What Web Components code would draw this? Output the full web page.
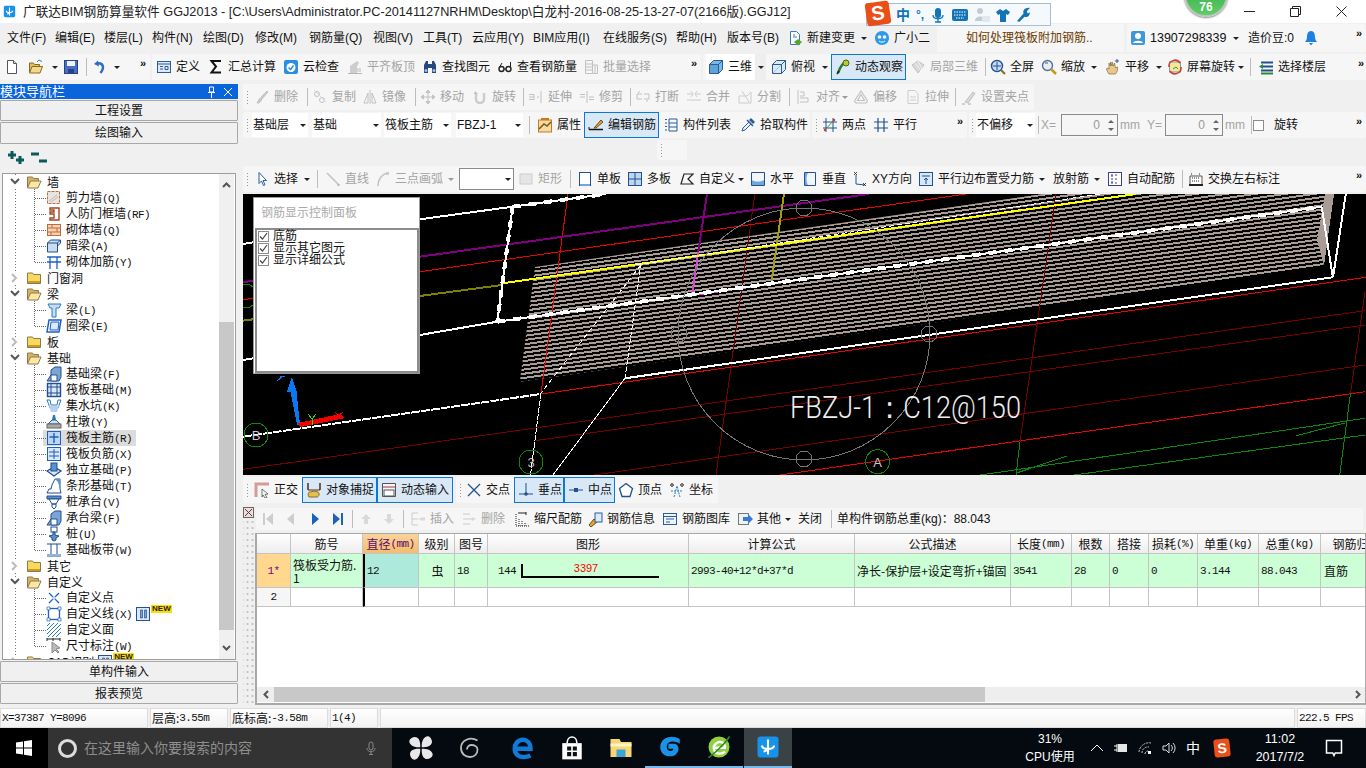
<!DOCTYPE html>
<html lang="zh">
<head>
<meta charset="utf-8">
<title>GGJ2013</title>
<style>
  html, body { margin: 0; height: 768px; overflow: hidden; background: #f0f0f0; }
  body { font: 12px/14px "Liberation Sans", "Noto Sans CJK SC", sans-serif; color: #111; }
  .main { display: flex; height: 624px; }
  .right { display: flex; flex-direction: column; width: 1123px; margin-left: 5px; }
</style>
</head>
<body>

<g-title>广联达BIM钢筋算量软件 GGJ2013 - [C:\Users\Administrator.PC-20141127NRHM\Desktop\白龙村-2016-08-25-13-27-07(2166版).GGJ12]</g-title>

<!-- menu -->
<g-row h="30">
  <g-bar w="1366" pad="7" flat>
    <g-btn w="48" plain>文件(F)</g-btn><g-btn w="49" plain>编辑(E)</g-btn><g-btn w="48" plain>楼层(L)</g-btn><g-btn w="51" plain>构件(N)</g-btn>
    <g-btn w="52" plain>绘图(D)</g-btn><g-btn w="54" plain>修改(M)</g-btn><g-btn w="64" plain>钢筋量(Q)</g-btn><g-btn w="50" plain>视图(V)</g-btn>
    <g-btn w="49" plain>工具(T)</g-btn><g-btn w="61" plain>云应用(Y)</g-btn><g-btn w="70" plain>BIM应用(I)</g-btn><g-btn w="73" plain>在线服务(S)</g-btn>
    <g-btn w="51" plain>帮助(H)</g-btn><g-btn w="58" plain>版本号(B)</g-btn>
    <g-btn w="71" i="newdoc">新建变更</g-btn><g-caret w="16"></g-caret><g-btn w="65" i="guang">广小二</g-btn>
    <g-bar w="187" pad="29" light style="color:#6b3a00">如何处理筏板附加钢筋..</g-bar>
    <g-bar w="239" pad="1" light style="margin-left:3px">
      <g-btn w="110" i="user" style="font-size:12.5px">13907298339</g-btn><g-caret w="12" style="margin-left:-8px"></g-caret>
      <g-btn w="47" plain style="margin-left:6px">造价豆:0</g-btn><g-icon name="bell" style="margin-left:8px"></g-icon><g-more></g-more>
    </g-bar>
  </g-bar>
</g-row>

<!-- standard toolbars -->
<g-row h="31" top="0" gap="2">
  <g-bar w="150" pad="2">
    <g-btn w="24" i="doc"></g-btn><g-btn w="22" i="open"></g-btn><g-caret w="13"></g-caret><g-btn w="22" i="save"></g-btn><g-sep w="7"></g-sep>
    <g-btn w="20" i="undo"></g-btn><g-caret w="14"></g-caret><g-more></g-more>
  </g-bar>
  <g-bar w="549" pad="2">
    <g-btn w="52" i="define">定义</g-btn><g-btn w="75" i="sigma">汇总计算</g-btn><g-btn w="64" i="cloud">云检查</g-btn><g-btn w="75" i="level" off>平齐板顶</g-btn>
    <g-btn w="75" i="find">查找图元</g-btn><g-btn w="86" i="glasses">查看钢筋量</g-btn><g-btn w="75" i="batch" off>批量选择</g-btn><g-more></g-more>
  </g-bar>
  <g-bar w="665" pad="3">
    <g-btn w="49" i="cube" style="background:#fff">三维</g-btn><g-caret w="11" style="background:#eee"></g-caret><g-btn w="49" i="top" style="margin-left:3px">俯视</g-btn><g-caret w="13"></g-caret>
    <g-btn w="75" i="orbit" on>动态观察</g-btn><g-btn w="74" i="local" off style="margin-left:2px">局部三维</g-btn><g-sep w="6"></g-sep>
    <g-btn w="51" i="fit">全屏</g-btn><g-btn w="49" i="zoom">缩放</g-btn><g-caret w="12"></g-caret><g-btn w="49" i="pan" style="margin-left:3px">平移</g-btn><g-caret w="13"></g-caret>
    <g-btn w="71" i="screen">屏幕旋转</g-btn><g-caret w="10"></g-caret><g-sep w="8"></g-sep><g-btn w="72" i="floors" style="margin-left:2px">选择楼层</g-btn><g-more></g-more>
  </g-bar>
</g-row>

<div class="main">
  <g-nav>
    <g-navbtn>工程设置</g-navbtn><g-navbtn>绘图输入</g-navbtn>
    <g-tree slot="tree"></g-tree>
    <g-navbtn slot="foot">单构件输入</g-navbtn><g-navbtn slot="foot">报表预览</g-navbtn>
  </g-nav>

  <div class="right">
    <g-row h="26">
      <g-bar w="791" grip="9">
        <g-btn w="52" i="del" off>删除</g-btn><g-sep w="6"></g-sep><g-btn w="50" i="copy" off>复制</g-btn><g-btn w="52" i="mirror" off>镜像</g-btn><g-sep w="6"></g-sep>
        <g-btn w="52" i="move" off>移动</g-btn><g-btn w="50" i="rot" off>旋转</g-btn><g-sep w="6"></g-sep><g-btn w="51" i="extend" off>延伸</g-btn><g-btn w="50" i="trim" off>修剪</g-btn><g-sep w="6"></g-sep>
        <g-btn w="51" i="brk" off>打断</g-btn><g-btn w="51" i="merge" off>合并</g-btn><g-btn w="50" i="split" off>分割</g-btn><g-sep w="9"></g-sep>
        <g-btn w="45" i="alignl" off>对齐</g-btn><g-caret w="12" off></g-caret><g-btn w="52" i="offset" off>偏移</g-btn><g-btn w="49" i="stretch" off>拉伸</g-btn><g-sep w="7"></g-sep>
        <g-btn w="72" i="grippt" off>设置夹点</g-btn>
      </g-bar>
    </g-row>
    <g-row h="26" top="2" gap="2">
      <g-bar w="567" grip="9">
        <g-combo w="56">基础层</g-combo><g-combo w="69" ml="4">基础</g-combo><g-combo w="67" ml="3">筏板主筋</g-combo><g-combo w="67" ml="5">FBZJ-1</g-combo>
        <g-sep w="12"></g-sep><g-btn w="49" i="attr">属性</g-btn><g-btn w="75" i="edit" on>编辑钢筋</g-btn><g-btn w="77" i="list" style="margin-left:2px">构件列表</g-btn><g-btn w="70" i="pick">拾取构件</g-btn>
      </g-bar>
      <g-bar w="155" grip="8">
        <g-btn w="51" i="twop">两点</g-btn><g-btn w="50" i="para">平行</g-btn><g-more></g-more>
      </g-bar>
      <g-bar w="397" grip="7">
        <g-combo w="59">不偏移</g-combo><g-sep w="6"></g-sep><g-btn w="20" plain off style="padding:0">X=</g-btn><g-spin w="57"></g-spin><g-btn w="29" plain off style="padding:0 0 0 2px">mm</g-btn>
        <g-btn w="18" plain off style="padding:0">Y=</g-btn><g-spin w="58"></g-spin><g-btn w="26" plain off style="padding:0 0 0 2px">mm</g-btn><g-sep w="4"></g-sep>
        <g-check w="21" box></g-check><g-btn w="40" plain style="padding:0">旋转</g-btn><g-more></g-more>
      </g-bar>
    </g-row>
    <g-row h="22" top="2" pad="414">
      <g-bar w="30" grip="9" style="height:20px"></g-bar>
    </g-row>
    <g-row h="26" top="4">
      <g-bar w="1123" grip="9">
        <g-btn w="50" i="cursor">选择</g-btn><g-caret w="10"></g-caret><g-sep w="11"></g-sep><g-btn w="50" i="line" off>直线</g-btn><g-btn w="72" i="arc" off>三点画弧</g-btn><g-caret w="12" off></g-caret>
        <g-combo w="55" ml="2" box></g-combo><g-btn w="51" i="rect" off style="margin-left:2px">矩形</g-btn><g-sep w="6"></g-sep>
        <g-btn w="50" i="single" style="margin-left:2px">单板</g-btn><g-btn w="52" i="multi">多板</g-btn><g-btn w="60" i="custom">自定义</g-btn><g-caret w="7"></g-caret>
        <g-btn w="52" i="horiz" style="margin-left:4px">水平</g-btn><g-btn w="50" i="vert">垂直</g-btn><g-btn w="66" i="xy">XY方向</g-btn><g-btn w="120" i="parallel">平行边布置受力筋</g-btn><g-caret w="12"></g-caret>
        <g-btn w="44" plain style="padding-left:5px">放射筋</g-btn><g-caret w="10"></g-caret><g-btn w="75" i="auto" style="margin-left:3px">自动配筋</g-btn><g-sep w="4"></g-sep>
        <g-btn w="100" i="swap" style="margin-left:2px">交换左右标注</g-btn><g-more></g-more>
      </g-bar>
    </g-row>

    <g-canvas style="margin-top:2px">
      <g-rebar-panel></g-rebar-panel>
    </g-canvas>

    <g-row h="25" top="2" gap="3">
      <g-bar w="210" grip="9">
        <g-btn w="50" i="ortho">正交</g-btn><g-btn w="75" i="snap" on>对象捕捉</g-btn><g-btn w="76" i="dyn" on>动态输入</g-btn>
      </g-bar>
      <g-bar w="262" grip="8">
        <g-btn w="50" i="cross">交点</g-btn><g-btn w="50" i="perp" on>垂点</g-btn><g-btn w="51" i="mid" on>中点</g-btn><g-btn w="51" i="vertex" style="margin-left:1px">顶点</g-btn><g-btn w="50" i="coord">坐标</g-btn>
      </g-bar>
    </g-row>

    <g-rebar>
      <g-bar w="1107" style="height:22px">
        <g-btn w="23" i="first" off center></g-btn><g-btn w="24" i="prev" off center></g-btn><g-btn w="23" i="next" center></g-btn><g-btn w="24" i="last" center></g-btn><g-sep w="4"></g-sep>
        <g-btn w="24" i="up" off center></g-btn><g-btn w="22" i="down" off center></g-btn><g-sep w="6"></g-sep>
        <g-btn w="50" i="insert" off style="margin-left:2px">插入</g-btn><g-btn w="53" i="remove" off style="margin-left:1px">删除</g-btn><g-btn w="73" i="scale">缩尺配筋</g-btn>
        <g-btn w="75" i="info">钢筋信息</g-btn><g-btn w="75" i="lib">钢筋图库</g-btn><g-btn w="49" i="other">其他</g-btn><g-caret w="8"></g-caret>
        <g-btn w="36" plain style="padding-left:6px">关闭</g-btn><g-sep w="6"></g-sep>
        <g-btn w="170" plain style="padding-left:3px">单构件钢筋总重(kg)：88.043</g-btn>
      </g-bar>
      <g-table slot="table"></g-table>
    </g-rebar>
  </div>
</div>

<g-status></g-status>
<g-taskbar></g-taskbar>

<script>
// icons, 16x16 unless the user asks for another size
const ICONS = {
  doc: '<path d="M3.5 1.5h6l3 3v10h-9z" fill="#fff" stroke="#555"/><path d="M9.5 1.5v3h3" fill="#ddd" stroke="#555"/>',
  open: '<path d="M1.5 13V4h4l1 1.5h5V8" fill="#e6bd5c" stroke="#8a6a20"/><path d="M1.5 14l2.5-6.5h10.5L12 14z" fill="#f5d98a" stroke="#8a6a20"/><path d="M9 3l2-2 3 1.5" fill="none" stroke="#3a7ac0"/>',
  save: '<rect x="1.5" y="1.5" width="13" height="13" fill="#4a6fc0" stroke="#26408a"/><rect x="4" y="2" width="8" height="5" fill="#eef2fb"/><rect x="5" y="10" width="6" height="4.5" fill="#26408a"/>',
  undo: '<path d="M6 1.5L2 5l5 2.5z" fill="#2d6fc4"/><path d="M5 4.5c6-1 8 4 3.5 9.5" fill="none" stroke="#2d6fc4" stroke-width="2.5"/>',
  define: '<rect x="1.5" y="2.5" width="13" height="11" fill="#dfeaf7" stroke="#2a5d9c"/><path d="M1.5 5h13M4 7.5h3M4 10h3M9 7.5h3v3H9z" stroke="#2a5d9c" fill="none"/>',
  sigma: '<path d="M12 3V2H3.5l4.5 5.5-4.5 6H12v-1" fill="none" stroke="#111" stroke-width="2"/>',
  cloud: '<rect x="1" y="1" width="14" height="14" rx="2" fill="#2a8fe0"/><circle cx="8" cy="8.5" r="4.5" fill="#fff"/><path d="M5.5 8.5l2 2 3-4" fill="none" stroke="#2a8fe0" stroke-width="1.5"/>',
  level: '<path d="M3 14V7l7-5 2 2-2 3v7z" fill="#bbb"/><path d="M1 14.5h14" stroke="#999"/><rect x="10" y="9" width="4" height="4" fill="#ccc"/>',
  find: '<path d="M2 14V6l2-4h2v12zM10 14V2h2l2 4v8z" fill="#27477e"/><rect x="6" y="5" width="4" height="4" fill="#27477e"/><circle cx="4" cy="11.5" r="1.5" fill="#9fc0ec"/><circle cx="12" cy="11.5" r="1.5" fill="#9fc0ec"/>',
  glasses: '<circle cx="4.5" cy="10" r="2.5" fill="none" stroke="#222" stroke-width="1.4"/><circle cx="11.5" cy="10" r="2.5" fill="none" stroke="#222" stroke-width="1.4"/><path d="M7 10h2M2.5 8L5 4M13.5 8V3" stroke="#222" fill="none"/>',
  batch: '<path d="M2.5 1.5h7v13h-7zM2.5 5h7M2.5 8h7M2.5 11h7M9.5 6h5v8.5h-5M12 6v8" fill="none" stroke="#aaa"/>',
  cube: '<path d="M1.5 5.5l4-4h9v9l-4 4h-9z" fill="#7ab8e8" stroke="#2a5d8c"/><path d="M1.5 5.5h9v9M10.5 5.5l4-4" fill="none" stroke="#2a5d8c"/><rect x="2" y="6" width="8" height="8" fill="#5ea4dc"/>',
  top: '<path d="M1.5 5.5l4-4h9v9l-4 4h-9z" fill="#dbeaf7" stroke="#2a5d8c"/><path d="M1.5 5.5h9v9M10.5 5.5l4-4" fill="none" stroke="#2a5d8c"/><path d="M2 14l8-8" stroke="#9fc4e6"/>',
  orbit: '<path d="M3 14C5 8 8 4 12 1.5" fill="none" stroke="#2d7a2d" stroke-width="2.5"/><circle cx="11" cy="4" r="3" fill="#b9c92e" stroke="#566010"/><path d="M2 15l2-3" stroke="#222" stroke-width="1.5"/>',
  local: '<path d="M2 6l6-4 6 4-6 8z" fill="#ccc" stroke="#aaa"/><path d="M5 4l6 8M8 2l4 8" stroke="#eee"/>',
  fit: '<circle cx="7" cy="7" r="5.5" fill="#c9ddf4" stroke="#23508f" stroke-width="1.4"/><path d="M7 3v8M3 7h8" stroke="#23508f"/><path d="M11 11l4 4" stroke="#8a6a20" stroke-width="2"/>',
  zoom: '<circle cx="6.5" cy="6.5" r="5" fill="#e6eef8" stroke="#55708f" stroke-width="1.4"/><path d="M10 10l5 5" stroke="#c49a20" stroke-width="2.5"/><path d="M4 4h3" stroke="#2a5d9c"/>',
  pan: '<path d="M4 15c-2-3-3-5-2-6l2 1V4l1.5 3V3l1.5 4V3l1.5 4 1-3 1 5 2-1c.5 3-.5 5-2 7z" fill="#e7c88a" stroke="#8a6a3a" stroke-width=".7"/><path d="M12 4V0M10 2h4" stroke="#2a5d9c"/>',
  screen: '<rect x="2.5" y="3" width="11" height="10" fill="#f5e79a" stroke="#6a9fd0"/><path d="M2 8a6 6 0 0 1 11-4M14 8a6 6 0 0 1-11 4" fill="none" stroke="#d93a2a" stroke-width="1.5"/><path d="M6 10l3-2 2 2" stroke="#3a9a3a" fill="none"/>',
  floors: '<path d="M3 3.5h12M3 7.5h12M3 11.5h12" stroke="#26508a" stroke-width="2"/><path d="M3 14.5h12" stroke="#2a8a3a" stroke-width="2"/><path d="M5 5L1 7.5 5 10z" fill="#2a8a3a"/>',
  del: '<path d="M3 14l3-5 2 2-3 3zM7 8l6-6 1 1-6 7z" fill="#bbb" stroke="#aaa"/>',
  copy: '<circle cx="5" cy="5" r="2.5" fill="none" stroke="#aaa"/><circle cx="10" cy="11" r="2.5" fill="none" stroke="#aaa"/><path d="M2 1l12 12" stroke="#ccc"/>',
  mirror: '<path d="M8 1v14M6 4L2 14h4zM10 4l4 10h-4z" fill="none" stroke="#aaa"/>',
  move: '<path d="M8 1v14M1 8h14M8 1L6 3.5h4zM8 15l-2-2.5h4zM1 8l2.5-2v4zM15 8l-2.5-2v4z" fill="#bbb" stroke="#aaa"/>',
  rot: '<path d="M4 4v6a4 4 0 1 0 8 0V4" fill="none" stroke="#bbb" stroke-width="2.5"/><path d="M3 2l3 3H2z" fill="#aaa"/>',
  extend: '<path d="M1 8h5M1 5.5h5v5H1M13 2v12M9 8h2" fill="none" stroke="#aaa"/>',
  trim: '<path d="M8 2v12M1 8h5M10 8h5M1 5.5h5M10 10.5h5" fill="none" stroke="#aaa"/>',
  brk: '<path d="M2 5h5M9 5h5M2 10h5M9 10h5M2 5v5M14 5v5M5 2l-2 2M11 13l2-2" fill="none" stroke="#aaa"/>',
  merge: '<path d="M1 5h6M9 5h6M1 11h14M5 2l2 3-2 3M11 2L9 5l2 3" fill="none" stroke="#bbb"/>',
  split: '<path d="M2 14V7h8l4-4v11zM5 2l7 11" fill="none" stroke="#bbb"/>',
  alignl: '<path d="M2 1v14M4 3h4v4H4M4 9h8v4H4" fill="none" stroke="#aaa"/>',
  offset: '<path d="M8 2l6 9a2 2 0 0 1-2 3H4a2 2 0 0 1-2-3zM8 5.5l3.5 6h-7z" fill="none" stroke="#aaa" stroke-width="1.2"/>',
  stretch: '<path d="M3 1.5h7l3 3v10H3zM5 8h6M5 11h6" fill="none" stroke="#bbb"/>',
  grippt: '<path d="M4 13L12 3l2 1.5L7 14z" fill="#ccc" stroke="#aaa"/><path d="M1 15h3M7 15h3" stroke="#888"/>',
  attr: '<rect x="1.5" y="3" width="13" height="12" fill="#f3d9a4" stroke="#c77a20"/><path d="M2 12l5-5 3 2 4-4" fill="none" stroke="#7a5a10" stroke-width="1.5"/><path d="M4 1h8v2H4z" fill="#c77a20"/>',
  edit: '<path d="M1 12.5h14" stroke="#111" stroke-width="1.5"/><path d="M1 12.5V10" stroke="#111"/><path d="M6 11l7-8 2 2-7 6z" fill="#e8a33a" stroke="#6a4a10"/>',
  list: '<path d="M2 2.5h2M2 6h2M2 9.5h2M2 13h2M6 2h8v12H6zM6 6h8M6 10h8" fill="none" stroke="#2a5d9c"/>',
  pick: '<path d="M2 14l1-3 6-6 2 2-6 6z" fill="#e8f2fb" stroke="#2a5d9c"/><path d="M9 3l2-2 4 4-2 2z" fill="#2a5d9c"/><path d="M7 3l6 6" stroke="#2a5d9c" stroke-width="1.5"/>',
  twop: '<path d="M4 1v14M11 1v14M1 5h14M1 11h14" stroke="#23508f"/><path d="M2 14L13 2" stroke="#3a9a3a"/><circle cx="3" cy="13" r="1.2" fill="#d33"/><circle cx="12" cy="3" r="1.2" fill="#d33"/>',
  para: '<path d="M5 1v14M11 1v14M1 5h14M1 11h14" stroke="#23508f" stroke-width="1.2"/>',
  cursor: '<path d="M5 1.5v11l2.5-2.5 2 4.5 1.5-.7-2-4.3h3.5z" fill="#fff" stroke="#2a5d9c"/>',
  line: '<path d="M2 2l12 12" stroke="#aaa" stroke-width="1.5"/><path d="M12 14h3" stroke="#888"/>',
  arc: '<path d="M3 15C3 9 6 4 12 2" fill="none" stroke="#aaa" stroke-width="1.5"/><rect x="11" y="1" width="3" height="3" fill="#bbb"/>',
  rect: '<rect x="2" y="3" width="12" height="10" fill="#ddd" stroke="#bbb"/>',
  single: '<rect x="2.5" y="1.5" width="11" height="13" fill="#fff" stroke="#23508f"/><path d="M3 14h10" stroke="#6fa8de" stroke-width="2"/>',
  multi: '<rect x="1.5" y="1.5" width="13" height="13" fill="#bcd6f0" stroke="#23508f"/><path d="M8 1.5v13M1.5 8h13" stroke="#23508f"/>',
  custom: '<path d="M2 13l3-10h9l-5 5 5 5z" fill="none" stroke="#222" stroke-width="1.2"/>',
  horiz: '<path d="M1.5 1.5h13v13h-13z" fill="#f2f6fb" stroke="#23508f"/><path d="M2 9c3 2 9 2 12 0v5H2z" fill="#6fa8de"/>',
  vert: '<path d="M2.5 1.5h11v13h-11z" fill="#f2f6fb" stroke="#23508f"/><path d="M6 2c-2 3-2 9 0 12H3V2z" fill="#6fa8de"/>',
  xy: '<path d="M4 4v9l9 1" fill="none" stroke="#23508f"/><path d="M2 1l3 3M5 1L2 4M11 12l3 3M14 12l-3 3" stroke="#222" fill="none" stroke-width=".8"/>',
  parallel: '<rect x="1.5" y="1.5" width="13" height="13" fill="#d9e8f7" stroke="#23508f"/><path d="M4 5h8M8 13V7M6 9l2-2 2 2" stroke="#23508f" fill="none"/>',
  auto: '<rect x="1.5" y="1.5" width="13" height="13" fill="#fff" stroke="#3b3f9c"/><path d="M5 4v8M4 4h2M4 12h2M8 4h3M8 8h3M8 12h3" stroke="#3b3f9c" stroke-dasharray="2 1" fill="none"/>',
  swap: '<path d="M1 13h14v2H1z" fill="#222"/><path d="M2 13V5h12v8" fill="#fff" stroke="#555"/><path d="M3 3h2M11 3h2M4 7h8M4 10h8" stroke="#222" stroke-dasharray="1 1"/>',
  ortho: '<path d="M2 15V2h13" fill="none" stroke="#d79a9a" stroke-width="3"/><path d="M8 7l6 5-3 .5 2 3-2 .5-2-3-1 2z" fill="#f4f4f4" stroke="#444" stroke-width=".7"/>',
  snap: '<path d="M2 1v7M14 1v7" stroke="#5a2a10" stroke-width="1.5"/><path d="M2 8h12" stroke="#5a2a10"/><path d="M3 15c-2-3 0-6 2-5l3-1 4 1c2 1 1 5-1 5z" fill="#e6c04c" stroke="#8a6a20"/>',
  dyn: '<path d="M1.5 1.5h13v13h-13z" fill="#f2f6fb" stroke="#555"/><path d="M1.5 5h13" stroke="#a33"/><rect x="3" y="8" width="10" height="6" fill="#fff" stroke="#555"/>',
  cross: '<path d="M2 2l12 12M14 2L2 14" stroke="#23508f" stroke-width="1.3"/>',
  perp: '<path d="M1 12h14M8 1v11" stroke="#23508f"/><circle cx="8" cy="12" r="1.8" fill="#23508f"/>',
  mid: '<path d="M1 8h14" stroke="#23508f"/><rect x="6" y="6" width="4" height="4" fill="#23508f"/>',
  vertex: '<path d="M8 1.5l6.5 5-2.5 8H4l-2.5-8z" fill="#fff" stroke="#23508f" stroke-width="1.3"/>',
  coord: '<path d="M5 15L8 4l3 11M2 9h12" fill="none" stroke="#2a7ab8" stroke-dasharray="2 1"/><circle cx="3" cy="3" r="1.3" fill="none" stroke="#222"/><circle cx="13" cy="3" r="1.3" fill="none" stroke="#222"/>',
  first: '<path d="M3 2h2v12H3zM13 2L6 8l7 6z" fill="#bbb"/>',
  prev: '<path d="M11 2L4 8l7 6z" fill="#bbb"/>',
  next: '<path d="M5 2l7 6-7 6z" fill="#1f5fc0"/>',
  last: '<path d="M11 2h2v12h-2zM3 2l7 6-7 6z" fill="#1f5fc0"/>',
  up: '<path d="M8 3l5 5h-3v5H6V8H3z" fill="#ccc"/>',
  down: '<path d="M8 13l5-5h-3V3H6v5H3z" fill="#ccc"/>',
  insert: '<path d="M2 2h6M2 8h6M2 14h6M2 2v12M9 8h3" fill="none" stroke="#bbb"/><rect x="11" y="6.5" width="4" height="3" fill="#ccc"/>',
  remove: '<path d="M2 3h7M2 8h9M2 13h7" fill="none" stroke="#bbb"/><path d="M11 6l4 2-4 2z" fill="#ccc"/>',
  scale: '<path d="M2 3v12M2 15h13M5 8v7M8 10v5M11 12v3" stroke="#222" stroke-dasharray="1 1"/><path d="M4 2h8M12 1v3" stroke="#222"/>',
  info: '<path d="M2 14l5-6 3 3-6 5z" fill="#e8a33a" stroke="#6a4a10"/><rect x="8" y="2" width="7" height="9" fill="#dbe8f7" stroke="#2a5d9c"/>',
  lib: '<rect x="1.5" y="2.5" width="13" height="11" fill="#eef3fa" stroke="#2a5d9c"/><path d="M1.5 5.5h13M4 8h8M4 11h4" stroke="#2a5d9c"/>',
  other: '<rect x="1.5" y="2.5" width="10" height="11" fill="#eef3fa" stroke="#777"/><path d="M6 6h5V3l5 5-5 5v-3H6z" fill="#3a7ad0"/>',
  newdoc: '<path d="M3.5 1.5h6l3 3v10h-9z" fill="#fff" stroke="#3a7ac0"/><path d="M6 7h4M6 5h2" stroke="#3a7ac0"/><path d="M11 9l4 3-4 3.5-4-3.5z" fill="#55a630"/>',
  guang: '<path d="M1 8c0-4 3-7 7-7s7 3 7 7c0 4-3 7-7 7s-7-3-7-7z" fill="#2f9be8"/><circle cx="5.5" cy="7" r="1.8" fill="#fff"/><circle cx="10.5" cy="7" r="1.8" fill="#fff"/><path d="M5 11c2 1.5 4 1.5 6 0" stroke="#fff" fill="none"/>',
  user: '<rect x="1" y="1" width="14" height="14" rx="2" fill="#3f97d8"/><circle cx="8" cy="6" r="3" fill="#fff"/><path d="M3 13c1-3 9-3 10 0z" fill="#fff"/>',
  bell: '<path d="M8 1c-3 0-4 3-4 6 0 2-1 4-2 5h12c-1-1-2-3-2-5 0-3-1-6-4-6z" fill="#1f7fe0"/><path d="M6 13h4l-2 2.5z" fill="#1f7fe0"/>',
  app: '<rect x="1" y="1" width="14" height="14" rx="2" fill="#1792ea"/><path d="M8 3v10M4 7c0 3 8 3 8 0M5 11c1.5 0 2-1 3-2" fill="none" stroke="#fff" stroke-width="1.4"/>',
  // tree icons
  fopen: '<path d="M1.5 13V3h5l1 1.5h5V7" fill="#d9b25a" stroke="#8a7a50"/><path d="M1.5 14l3-7h10.5l-3 7z" fill="#fbe8a6" stroke="#8a7a50"/>',
  fclosed: '<path d="M1.5 13.5V3h5l1 1.5h7v9z" fill="#fbd95e" stroke="#8a7a50"/><path d="M2 13h12V11H2z" fill="#c79a20"/>',
  shear: '<rect x="1.5" y="1.5" width="12" height="12" fill="#e8e4de" stroke="#c2683a" stroke-dasharray="3 1"/><path d="M3 11l8-6M5 12l7-5" stroke="#bbb"/>',
  rfwall: '<path d="M4 2h9v12H4v-2h4V8H4V6h4V4H4z" fill="#fff" stroke="#a3481e" stroke-width="1.4"/>',
  brick: '<rect x="1.5" y="2.5" width="13" height="11" fill="#f6d4b6" stroke="#c2683a"/><path d="M1.5 6h13M1.5 10h13M6 2.5V6M11 6v4M5 10v3.5" stroke="#c2683a"/>',
  darkb: '<path d="M1.5 5l3-3h10v3l-3 3v6h-10z" fill="#c9ddf1" stroke="#23508f"/><path d="M1.5 5h10v9M11.5 5l3-3" fill="none" stroke="#23508f"/>',
  reinf: '<path d="M1 3h14M1 8h14M4 3v12M11 3v12M4 8h7" stroke="#1f5fc0" fill="none" stroke-width="1.3"/>',
  beam: '<path d="M2 2h13l-2 4h-3v9H6V6H4z" fill="#c9ddf1" stroke="#2a7ac0"/>',
  ringb: '<path d="M3 2h12l-2 12H1z" fill="#fff" stroke="#1f5fc0" stroke-width="1.5"/><path d="M5 4h8l-1 8H4z" fill="#dbe8f7" stroke="#1f5fc0"/>',
  fbeam: '<path d="M1 15l4-6V4l4-3h6v10l-2 4z" fill="#7aa4d6" stroke="#23508f"/><path d="M5 15V9h6v6z" fill="#fff" stroke="#23508f"/>',
  raft: '<rect x="1.5" y="1.5" width="13" height="13" fill="#dbe8f7" stroke="#1f4f8f" stroke-width="1.4"/><path d="M5 1.5v13M11 1.5v13M1.5 5h13M1.5 11h13" stroke="#1f4f8f"/>',
  pit: '<path d="M1 2h3l1 5h6l1-5h3l-3 8H4z" fill="#fff" stroke="#2a7ac0"/><path d="M3 8h10l-2 6H5z" fill="#b4d2ee"/>',
  pier: '<path d="M7 1h2l1 5H6z" fill="#2a7ac0"/><path d="M2 10l4-4h4l4 4z" fill="#cfe0f2" stroke="#2a5d9c"/><rect x="1" y="10" width="14" height="4" fill="#aaa" stroke="#666"/>',
  main: '<rect x="1.5" y="1.5" width="13" height="13" fill="#bcd6f5" stroke="#1f5fc0"/><path d="M8 3v10M3.5 7h9" stroke="#1f5fc0" stroke-width="1.4"/>',
  neg: '<rect x="1.5" y="1.5" width="13" height="13" fill="#dbe8f7" stroke="#1f5fc0"/><path d="M8 3v10M3 6h10M3 10h10" stroke="#1f5fc0"/>',
  iso: '<path d="M1 9l7-4 7 4-7 5z" fill="#dbe8f7" stroke="#1f4f8f" stroke-width="1.3"/><rect x="5" y="1" width="6" height="8" fill="#5d8fc9" stroke="#1f4f8f"/>',
  stripf: '<path d="M1 15l2-4h2l1-4 3-6h5v10l1 4z" fill="#fff" stroke="#1f4f8f"/><path d="M9 1h5v10L12 4z" fill="#5d8fc9"/>',
  cap: '<path d="M1 2h14v3H1z" fill="#5d8fc9" stroke="#1f4f8f"/><path d="M3 5l3 5h4l3-5zM6 10h4v3L8 15l-2-2z" fill="#fff" stroke="#1f4f8f"/>',
  pile: '<rect x="5" y="1" width="6" height="5" fill="#fff" stroke="#1f4f8f"/><path d="M7 6h2v3l4 1-3 2v2l-2 1-2-1v-2L3 10l4-1z" fill="#5d8fc9" stroke="#1f4f8f"/>',
  band: '<path d="M1 2h14M1 14h14M5 2v12M11 2v12M2 13h12" stroke="#1f4f8f" fill="none"/><path d="M1 12h14v2H1z" fill="#8fb4e0"/>',
  cpoint: '<path d="M3 3l10 10M13 3L3 13" stroke="#1f5fc0" stroke-width="1.2"/><circle cx="8" cy="8" r="1.8" fill="#bcd6f5"/>',
  cline: '<rect x="2.5" y="2.5" width="11" height="11" fill="#fff" stroke="#1f5fc0" stroke-width="1.3"/><path d="M1 1h3v3H1zM12 1h3v3h-3zM1 12h3v3H1zM12 12h3v3h-3z" fill="#fff" stroke="#1f5fc0" stroke-width=".7"/>',
  cface: '<path d="M1 4l3-3M1 8l7-7M1 12L12 1M2 15L15 2M6 15l9-9M10 15l5-5" stroke="#2a7ac0"/>',
  dim: '<path d="M1 1h13M1 0v3M7 0v3M14 0v3" stroke="#222"/><path d="M6 4v11l3-3 3 3 1-1-3-3 4-1z" fill="#bbb" stroke="#888"/>',
  newlist: '<rect x="1.5" y="1.5" width="13" height="13" fill="#dbe8f7" stroke="#23508f"/><path d="M5.5 4h2v8h-2zM9.5 4h2v8h-2z" fill="#7aa4d6" stroke="#23508f" stroke-width=".7"/>',
  // taskbar
  pinwheel: '<path d="M7.5 7.5C2 8-1 4 2 2s6 0 5.5 5.5zM8.5 7.5C8 2 12-1 14 2s0 6-5.5 5.5zM7.5 8.5C8 14 4 17 2 14s0-6 5.5-5.5zM8.5 8.5C14 8 17 12 14 14s-6 0-5.5-5.5z" fill="#e8e8e8"/>',
  swirl: '<path d="M13 3C8 0 2 3 2 8c0 4 3 6 6 6s5-2 5-5c0-2-2-3-4-3-1.5 0-3 1-3 3" fill="none" stroke="#bbb" stroke-width="1.2"/>',
  edge: '<path d="M3.5 8.5h9.500C13 4.500 10.500 2.500 8 2.500 4.500 2.500 2.500 5.500 2.500 8.500c0 4 3 5.500 6 5.500 2 0 3.500-.5 4.500-1" fill="none" stroke="#0f7ad8" stroke-width="3"/>',
  store: '<path d="M2 5h12v10H2z" fill="#fff"/><path d="M5 5c0-5 6-5 6 0" fill="none" stroke="#fff"/><path d="M5 7h2.5v2.500H5zM8.5 7H11v2.500H8.500zM5 10.500h2.500V13H5zM8.500 10.500H11V13H8.500z" fill="#111"/>',
  explorer: '<path d="M1 2h6l1 2h7v10H1z" fill="#f6d773"/><path d="M1 5h14v2H1z" fill="#fff3c4"/><path d="M5 9h6v5H5z" fill="#3aa3d8"/>',
  gblue: '<path d="M14 3C9 0 2 2 2 8c0 5 5 7 9 5 3-2 3-6 0-7H7v3h3c0 2-4 2-4-1 0-4 5-4 8-2z" fill="#1c92e6"/>',
  ie: '<circle cx="8" cy="8" r="7" fill="#8fd13f"/><path d="M4 8.5h8C12 5 9 4 7 5S4 8 5 10.500 10 13 12 11" fill="none" stroke="#fff" stroke-width="1.6"/><path d="M1 15C3 14 12 6 15 1" fill="none" stroke="#2f8a2f"/>',
  mic: '<rect x="6" y="2" width="4" height="8" rx="2" fill="none" stroke="#888"/><path d="M4 8c0 5 8 5 8 0M8 12v2M6 14.5h4" fill="none" stroke="#888"/>',
  power: '<rect x="5" y="4" width="9" height="8" fill="#fff" opacity=".9"/><path d="M1 6h3M1 10h3M4 4v8" stroke="#fff"/>',
  wifi: '<path d="M2 12a10 10 0 0 1 12-9M5 13a6 6 0 0 1 7-6M8 14a3 3 0 0 1 3-3" fill="none" stroke="#ccc" stroke-dasharray="2 1"/><rect x="11" y="11" width="3" height="3" fill="#fff"/>',
  sound: '<path d="M2 6h3l3-3v10l-3-3H2z" fill="none" stroke="#ddd"/><path d="M10 5a4 4 0 0 1 0 6M12 3a7 7 0 0 1 0 10" fill="none" stroke="#ddd"/>',
  note: '<path d="M2 2h12v10H9l-1 2-1-2H2z" fill="none" stroke="#fff" stroke-width="1.2"/>'
};

// small helper so every element below stays a plain class with an open shadow root
function shadow(el, html) {
  el.attachShadow({ mode: "open" }).innerHTML = html;
  return el.shadowRoot;
}
function sizeFromAttrs(el) {
  if (el.hasAttribute("w")) el.style.width = el.getAttribute("w") + "px";
  if (el.hasAttribute("ml")) el.style.marginLeft = el.getAttribute("ml") + "px";
}

class GIcon extends HTMLElement {
  connectedCallback() {
    var s = this.getAttribute("size") || 16;
    if (!this.shadowRoot) {
      shadow(this, `<style>:host{display:block;flex:none;line-height:0}</style>
        <svg width="${s}" height="${s}" viewBox="0 0 16 16">${ICONS[this.getAttribute("name")] || ""}</svg>`);
    }
  }
}
customElements.define("g-icon", GIcon);

class GRow extends HTMLElement {
  constructor() {
    super();
    shadow(this, `<style>:host{display:flex;flex:none;box-sizing:border-box;align-items:flex-start}</style><slot></slot>`);
  }
  connectedCallback() {
    this.style.height = this.getAttribute("h") + "px";
    if (this.hasAttribute("top")) this.style.marginTop = this.getAttribute("top") + "px";
    if (this.hasAttribute("gap")) this.style.gap = this.getAttribute("gap") + "px";
    if (this.hasAttribute("pad")) this.style.paddingLeft = this.getAttribute("pad") + "px";
    // the standard bars sit 1px under the row top
    if (this.getAttribute("h") == "31") this.style.paddingTop = "1px";
  }
}
customElements.define("g-row", GRow);

class GBar extends HTMLElement {
  constructor() {
    super();
    shadow(this, `<style>
      :host{display:flex;flex:none;align-items:center;height:26px;box-sizing:border-box;background:#f6f6f6;border-radius:2px}
      :host([flat]){background:transparent;height:30px}
      :host([light]){background:#f6f6f6;height:28px}
      .grip{flex:none;height:14px;background:radial-gradient(circle,#999 .8px,transparent 1px) center top/3px 3px repeat-y}
    </style><div class="grip"></div><slot></slot>`);
  }
  connectedCallback() {
    sizeFromAttrs(this);
    if (this.hasAttribute("pad")) this.style.paddingLeft = this.getAttribute("pad") + "px";
    var grip = this.shadowRoot.querySelector(".grip");
    if (this.hasAttribute("grip")) grip.style.width = this.getAttribute("grip") + "px";
    else grip.style.display = "none";
  }
}
customElements.define("g-bar", GBar);

class GBtn extends HTMLElement {
  constructor() {
    super();
    shadow(this, `<style>
      :host{display:flex;flex:none;align-items:center;gap:4px;height:100%;box-sizing:border-box;padding-left:2px;white-space:nowrap}
      :host([plain]){padding-left:0}
      :host([center]){justify-content:center;padding-left:0}
      :host([off]){color:#a4a4a4}
      :host([off]) g-icon{filter:grayscale(1) opacity(.7)}
      :host([on]){background:#d8e8f6;border:1px solid #0a78d4;padding-left:3px}
    </style><span id="ic"></span><slot></slot>`);
  }
  connectedCallback() {
    sizeFromAttrs(this);
    var ic = this.shadowRoot.querySelector("#ic");
    if (this.hasAttribute("i")) {
      var icon = document.createElement("g-icon");
      icon.setAttribute("name", this.getAttribute("i"));
      ic.replaceWith(icon);
    } else if (ic) {
      ic.remove();
    }
  }
}
customElements.define("g-btn", GBtn);

class GCaret extends HTMLElement {
  constructor() {
    super();
    shadow(this, `<style>
      :host{display:flex;flex:none;align-items:center;justify-content:center;height:100%}
      i{display:block;border:3px solid transparent;border-top:3px solid #222;border-bottom:0}
      :host([off]) i{border-top-color:#999}
    </style><i></i>`);
  }
  connectedCallback() { sizeFromAttrs(this); }
}
customElements.define("g-caret", GCaret);

class GSep extends HTMLElement {
  constructor() {
    super();
    shadow(this, `<style>
      :host{display:flex;flex:none;justify-content:center;height:100%;align-items:center}
      i{display:block;width:1px;height:18px;background:#bdbdbd}
    </style><i></i>`);
  }
  connectedCallback() { sizeFromAttrs(this); }
}
customElements.define("g-sep", GSep);

class GMore extends HTMLElement {
  constructor() {
    super();
    shadow(this, `<style>
      :host{display:block;flex:none;margin-left:auto;margin-right:4px;align-self:flex-start;font:bold 11px/14px "Liberation Sans",sans-serif;margin-top:2px}
    </style>»`);
  }
}
customElements.define("g-more", GMore);

class GCombo extends HTMLElement {
  constructor() {
    super();
    shadow(this, `<style>
      :host{display:flex;flex:none;align-items:center;height:24px;box-sizing:border-box;background:#fff;padding-left:1px}
      :host([box]){border:1px solid #8a8a8a;height:22px}
      .t{flex:1;white-space:nowrap;overflow:hidden}
      i{display:block;margin-right:2px;border:3px solid transparent;border-top:3px solid #222;border-bottom:0}
    </style><div class="t"><slot></slot></div><i></i>`);
  }
  connectedCallback() { sizeFromAttrs(this); }
}
customElements.define("g-combo", GCombo);

class GSpin extends HTMLElement {
  constructor() {
    super();
    shadow(this, `<style>
      :host{display:flex;flex:none;align-items:center;height:22px;box-sizing:border-box;border:1px solid #8a8a8a;justify-content:flex-end;color:#999;background:#f6f6f6}
      .a{display:flex;flex-direction:column;gap:5px;margin:0 3px 0 8px}
      i{display:block;border:3px solid transparent;border-bottom:3px solid #666;border-top:0}
      i+i{border-bottom:0;border-top:3px solid #666}
    </style>0<div class="a"><i></i><i></i></div>`);
  }
  connectedCallback() { sizeFromAttrs(this); }
}
customElements.define("g-spin", GSpin);

class GCheck extends HTMLElement {
  constructor() {
    super();
    shadow(this, `<style>
      :host{display:flex;flex:none;align-items:center;gap:4px;height:12px;line-height:12px}
      :host([box]){height:100%}
      b{flex:none;display:block;width:9px;height:9px;border:1px solid #8c8c8c;background:#fff}
      svg{display:block}
    </style><b id="b"></b><slot></slot>`);
  }
  connectedCallback() {
    sizeFromAttrs(this);
    if (this.hasAttribute("checked")) {
      this.shadowRoot.querySelector("#b").innerHTML = '<svg width="9" height="9" viewBox="0 0 9 9"><path d="M1 4.5l2.5 2.5L8 1" fill="none" stroke="#444" stroke-width="1.2"/></svg>';
    }
  }
}
customElements.define("g-check", GCheck);

class GTitle extends HTMLElement {
  constructor() {
    super();
    shadow(this, `<style>
      :host{display:flex;position:relative;z-index:5;height:23px;background:#fff;align-items:center;color:#222;font-size:12.7px}
      .app{margin:0 7px 0 3px}
      .t{white-space:nowrap}
      .wins{display:flex;margin-left:auto;margin-right:2px}
      .wins div{width:46px;height:23px;display:flex;align-items:center;justify-content:center}
      /* the score ball and the IME bar lie over the title */
      .ball{position:absolute;left:1184px;top:-27px;width:44px;height:44px;border-radius:50%;box-sizing:border-box;border:2px solid #b9c4bb;
        background:linear-gradient(#2f9f42,#5ccd66);color:#fff;font:bold 12px/14px "Liberation Sans",sans-serif;text-align:center;padding-top:25px;box-shadow:0 1px 2px #888}
      .ime{position:absolute;left:866px;top:3px;width:185px;height:23px;box-sizing:border-box;border:1px solid #a7bfd6;background:#f6f9fc;display:flex;align-items:center}
      .s{width:24px;height:23px;margin:-3px 0 0 -1px;background:#ea4f17;color:#fff;font:bold 20px/23px "Liberation Sans",sans-serif;text-align:center;border-radius:3px;transform:rotate(-8deg)}
      .ime span{color:#1273b8;font-weight:bold;font-size:14px}
      .ime .gp{display:flex;align-items:center;gap:6px;margin-left:9px}
    </style>
    <g-icon class="app" name="app" size="13"></g-icon><div class="t"><slot></slot></div>
    <div class="wins">
      <div><svg width="11" height="11"><path d="M0 5.5h11" stroke="#222"/></svg></div>
      <div><svg width="11" height="11"><path d="M.5 2.5h8v8h-8zM2.5 2.5v-2h8v8h-2" fill="none" stroke="#222"/></svg></div>
      <div><svg width="11" height="11"><path d="M.5.5l10 10M10.5.5l-10 10" stroke="#222"/></svg></div>
    </div>
    <div class="ball">76</div>
    <div class="ime"><div class="s">S</div>
      <div class="gp" style="margin-left:6px"><span>中</span><span style="font-size:12px">°,</span>
      <svg width="16" height="18" viewBox="0 0 16 16"><rect x="5" y="1" width="6" height="10" rx="3" fill="#1273b8"/><path d="M3 8c0 5 10 5 10 0M8 12v3M5 15h6" fill="none" stroke="#1273b8" stroke-width="1.3"/></svg>
      <svg width="16" height="14" viewBox="0 0 16 14"><rect x="0" y="1" width="16" height="12" rx="2" fill="#1273b8"/><path d="M2 4h12M2 7h12M4 10h8" stroke="#fff" stroke-dasharray="1.5 1"/></svg>
      <svg width="16" height="16" viewBox="0 0 16 16"><circle cx="6" cy="4" r="3" fill="#c2ccd6"/><path d="M1 14c0-6 10-6 10 0z" fill="#c2ccd6"/><rect x="8" y="9" width="8" height="6" fill="#e2e8ee"/></svg>
      <svg width="14" height="14" viewBox="0 0 14 14"><path d="M4 1L0 4l2 3 2-1v8h6V6l2 1 2-3-4-3-3 2z" fill="#1273b8"/></svg>
      <svg width="15" height="15" viewBox="0 0 14 14"><path d="M1 13l6-7c-1-3 2-6 6-5l-3 3 1 2 2-1c0 4-3 5-5 4l-5 5z" fill="#1273b8"/></svg>
      </div></div>`);
  }
}
customElements.define("g-title", GTitle);

class GNavBtn extends HTMLElement {
  constructor() {
    super();
    shadow(this, `<style>
      :host{display:flex;align-items:center;justify-content:center;height:22px;box-sizing:border-box;margin:0 0 1px 0;width:238px;background:#f0f0f0;border:1px solid #a8a8a8;border-radius:1px;font-size:12px;padding-top:1px}
    </style><slot></slot>`);
  }
}
customElements.define("g-navbtn", GNavBtn);

class GNav extends HTMLElement {
  constructor() {
    super();
    shadow(this, `<style>
      :host{display:flex;flex-direction:column;flex:none;width:238px;height:621px}
      .head{display:flex;align-items:center;height:15px;background:#0a64dc;color:#fff;font-size:13px;margin-bottom:1px;flex:none}
      .head svg{margin-right:7px}
      .head span{margin-right:auto}
      .tools{display:flex;gap:5px;align-items:center;height:29px;padding-left:7px;margin-top:-1px;flex:none}
    </style>
    <div class="head"><span>模块导航栏</span>
      <svg width="9" height="12"><path d="M2.5 1h4v5h-4zM1 6.5h7M4.5 7v5" fill="none" stroke="#fff"/></svg>
      <svg width="10" height="10" style="margin-right:5px"><path d="M1 1l8 8M9 1L1 9" stroke="#fff"/></svg>
    </div>
    <slot></slot>
    <div class="tools">
      <svg width="18" height="16"><path d="M5 1v8M1 5h8M13 6v8M9 10h8" stroke="#0d5a5a" stroke-width="3" fill="none"/></svg>
      <svg width="18" height="16"><path d="M1 4h8M9 11h8" stroke="#0d5a5a" stroke-width="3"/></svg>
    </div>
    <slot name="tree"></slot>
    <slot name="foot"></slot>`);
  }
}
customElements.define("g-nav", GNav);

// [level, label, key, icon, flags]
const TREE = [
  [0, "墙", "", "o"], [1, "剪力墙", "(Q)", "shear"], [1, "人防门框墙", "(RF)", "rfwall"], [1, "砌体墙", "(Q)", "brick"], [1, "暗梁", "(A)", "darkb"], [1, "砌体加筋", "(Y)", "reinf", "last"],
  [0, "门窗洞", "", "c"], [0, "梁", "", "o"], [1, "梁", "(L)", "beam"], [1, "圈梁", "(E)", "ringb", "last"], [0, "板", "", "c"],
  [0, "基础", "", "o"], [1, "基础梁", "(F)", "fbeam"], [1, "筏板基础", "(M)", "raft"], [1, "集水坑", "(K)", "pit"], [1, "柱墩", "(Y)", "pier"],
  [1, "筏板主筋", "(R)", "main", "sel"], [1, "筏板负筋", "(X)", "neg"], [1, "独立基础", "(P)", "iso"], [1, "条形基础", "(T)", "stripf"], [1, "桩承台", "(V)", "cap"],
  [1, "承台梁", "(F)", "fbeam"], [1, "桩", "(U)", "pile"], [1, "基础板带", "(W)", "band", "last"],
  [0, "其它", "", "c"], [0, "自定义", "", "o"], [1, "自定义点", "", "cpoint"], [1, "自定义线", "(X)", "cline", "new"], [1, "自定义面", "", "cface"], [1, "尺寸标注", "(W)", "dim", "last"],
  [0, "CAD识别", "", "c", "new"]
];

class GTree extends HTMLElement {
  constructor() {
    super();
    var rows = TREE.map(function(r) {
      var flags = r[4] || "";
      var extra = flags == "new" ? '<g-icon name="newlist" style="margin-left:3px"></g-icon><b class="nw">NEW</b>' : "";
      if (r[0] == 0) {
        var chev = r[3] == "o" ? '<path d="M1 2l4 4 4-4" fill="none" stroke="#555" stroke-width="2"/>' : '<path d="M2 1l4 4-4 4" fill="none" stroke="#bbb" stroke-width="2"/>';
        return `<div class="r top"><svg class="ch" width="10" height="10">${chev}</svg><g-icon name="${r[3] == "o" ? "fopen" : "fclosed"}"></g-icon><span class="l">${r[1]}</span>${extra}</div>`;
      }
      return `<div class="r kid ${flags}"><g-icon name="${r[3]}"></g-icon><span class="l">${r[1]}<span class="k">${r[2]}</span></span>${extra}</div>`;
    }).join("");
    shadow(this, `<style>
      :host{display:flex;width:234px;height:487px;margin-left:2px;box-sizing:border-box;border:1px solid #9c9c9c;background:#fff;overflow:hidden;flex:none;margin-bottom:1px}
      .list{flex:1;overflow:hidden;font-family:"Noto Sans CJK SC",sans-serif;
        background:repeating-linear-gradient(#777 0 1px,transparent 1px 3px) 12px 0/1px 100% no-repeat}
      .r{display:flex;align-items:center;height:16px;position:relative;white-space:nowrap}
      .top{padding-left:7px}
      .ch{flex:none;background:#fff;margin-right:6px;width:10px;margin-left:0}
      .top .l{margin-left:5px;font-size:12px}
      .kid{padding-left:43px}
      .kid .l{margin-left:4px}
      .kid::before{content:"";position:absolute;left:31px;top:-1px;bottom:0;border-left:1px dotted #666}
      .kid.last::before{bottom:8px}
      .kid::after{content:"";position:absolute;left:32px;width:11px;top:8px;border-top:1px dotted #666}
      .k{font:11px/14px "Liberation Mono",monospace;letter-spacing:-.6px}
      .sel{background:linear-gradient(#dcdcdc,#dcdcdc) 40px 0/93px 100% no-repeat}
      .nw{font:bold 8px/8px "Liberation Sans",sans-serif;background:#ffdd00;color:#222;padding:0 1px;align-self:flex-start;margin-top:-1px}
      .sb{flex:none;width:15px;background:#f0f0f0;display:flex;flex-direction:column;align-items:center;margin-right:1px}
      .sb svg{flex:none;margin:8px 0}
      .th{width:15px;height:308px;background:#c8c8c8;margin-top:126px}
      .sb .d{margin-top:auto}
    </style>
    <div class="list">${rows}</div>
    <div class="sb"><svg width="9" height="6"><path d="M1 5l3.5-3.5L8 5" fill="none" stroke="#555" stroke-width="2"/></svg><div class="th"></div>
    <svg class="d" width="9" height="6"><path d="M1 1l3.5 3.5L8 1" fill="none" stroke="#555" stroke-width="2"/></svg></div>`);
  }
}
customElements.define("g-tree", GTree);

// the CAD view: a free canvas in screen coordinates
class GCanvas extends HTMLElement {
  constructor() {
    super();
    var L = function(c, w, pts, extra) {
      return `<polyline points="${pts}" fill="none" stroke="${c}" stroke-width="${w}" ${extra || ""}/>`;
    };
    var dark = "#7a0000", red = "#f00000", green = "#0a8a0a", white = "#fff";
    // rebar hatch: one aliased line per bar, cut to the slab outline
    var bars = "";
    for (var y = 270; y < 580; y += 4.2) {
      bars += L("#a99c94", 2, `515,${y.toFixed(1)} 1330,${(y - 116.1).toFixed(1)}`);
    }
    var svg = `
    <defs>
      <clipPath id="slab"><polygon points="535,267 1042,194 1325,194 1323.5,266.7 519.8,381.7"/></clipPath>
    </defs>
    <g clip-path="url(#slab)">${bars}</g>
    <polygon points="1325,194 1334,194 1324,266 1317,240" fill="#a99c94"/>
    ${L(dark, 1, "243,469.3 1365,310.7")}
    ${L(dark, 1, "536,440.5 1365,325")}
    ${L(dark, 1, "594,475 1365,365")}
    ${L(red, 1, "780,475 1365,391.7")}
    ${L(dark, 1, "754.8,194 716,475")}
    ${L(dark, 1, "1056,194 1020,441.7")}
    ${L(dark, 1, "1365,291.7 1350.5,393.3")}
    ${L(green, 1, "1020,441.7 1016,475")}
    ${L(green, 1, "1350.5,393.3 1339.7,475")}
    ${L(green, 1, "980.5,475 1365,418.3")}
    ${L(green, 1, "1074,475 1365,435")}
    ${L(green, 1, "1016.6,473 1067,456")}
    ${L(green, 1, "1296.4,435.7 1345,423")}
    ${L(red, 1, "243,300 253,298")}
    ${L(red, 1, "419.8,271.7 966,194")}
    ${L(red, 1, "541,394 1366,277.3")}
    ${L(red, 1, "568,194 541,394")}
    ${L("#800080", 2, "243,282 253,281")}
    ${L("#800080", 2, "419.8,256.7 868.6,194")}
    ${L("#800080", 2, "707,194 698.3,251.7")}
    ${L("#e040e0", 2, "698.3,251.7 692,295 718,291.7")}
    ${L("#808000", 2, "243,320.7 253,319.3")}
    ${L("#808000", 2, "419.8,296 502,285")}
    ${L("#a0a000", 2, "784,194 771.6,280")}
    ${L("#ffff00", 2, "502,283.3 1135.7,194")}
    ${L(white, 1, "636,265 1099.6,194", 'stroke-dasharray="5 3"')}
    ${L(white, 1, "641,263 625,378.3", 'stroke-dasharray="5 2"')}
    ${L(white, 1, "641,265 541,393", 'stroke-dasharray="5 3"')}
    ${L(white, 1, "541,393 530.5,475", 'stroke-dasharray="6 1"')}
    ${L(white, 1, "625,378.3 553,475")}
    ${L(white, 2, "243,436.7 541,394", 'stroke-dasharray="9 1"')}
    ${L(white, 2, "625,378.3 1332.5,277.3")}
    ${L(white, 2, "1345.8,194 1333,277.3")}
    ${L(white, 2, "1321.7,206.7 1332.5,275")}
    ${L(white, 2, "243,244 253,242.3")}
    ${L(white, 2, "243,360 253,358.3")}
    ${L(white, 2, "419.8,335 497.3,321.7")}
    ${L(white, 2, "419.8,219.3 512.6,206.7 605.5,194")}
    ${L(white, 2, "512.6,206.7 497.3,321.7")}
    ${L(white, 2, "497.3,321.7 1321.7,206.7")}
    ${L(white, 4, "512.6,206.7 497.3,321.7", 'stroke-dasharray="7 7"')}
    ${L(white, 4, "497.3,321.7 1321.7,206.7", 'stroke-dasharray="8 8"')}
    ${L(white, 4, "512.6,206.7 605.5,194", 'stroke-dasharray="8 8"')}
    <g fill="none" stroke="#777">
      <circle cx="804" cy="334" r="126"/><circle cx="804" cy="208" r="8"/><circle cx="929" cy="334" r="8"/><circle cx="804" cy="459" r="8"/><circle cx="679" cy="334" r="8"/>
    </g>
    <g fill="none" stroke="${green}">
      <circle cx="245" cy="296" r="12"/><circle cx="256" cy="435" r="12"/><circle cx="531" cy="462" r="12"/><circle cx="877.6" cy="461.7" r="12"/>
    </g>
    <g font-family="Liberation Sans" font-size="13" fill="#c8c8c8" text-anchor="middle">
      <text x="256" y="440">B</text><text x="531" y="467">3</text><text x="877.6" y="467">A</text>
    </g>
    <polygon points="292,377 297,392 296.6,392 300,425 297,425 290.5,392 287,392" fill="#0a78f0"/>
    <path d="M277 381l5-4h-2l5-1" fill="none" stroke="#0a78f0"/>
    <polygon points="298,423 340,414 345,418 300,427" fill="#f00000"/>
    <path d="M335 412l8 7M343 412l-8 7" stroke="#f00000"/>
    <path d="M308 414l4 5 4-5M312 419v6" fill="none" stroke="#20e020"/>
    <text x="790" y="418" font-family="Roboto" font-weight="300" font-size="31" fill="#eee" textLength="231" lengthAdjust="spacingAndGlyphs">FBZJ-1：C12@150</text>`;
    shadow(this, `<style>
      :host{display:block;position:relative;flex:none;width:1123px;height:281px;background:#000;overflow:hidden}
      svg{display:block}
      ::slotted(g-rebar-panel){position:absolute;left:10px;top:3px}
    </style>
    <svg width="1123" height="281" viewBox="243 194 1123 281" shape-rendering="crispEdges">${svg}</svg><slot></slot>`);
  }
}
customElements.define("g-canvas", GCanvas);

class GRebarPanel extends HTMLElement {
  constructor() {
    super();
    shadow(this, `<style>
      :host{display:flex;flex-direction:column;width:167px;height:177px;box-sizing:border-box;background:#fff;border:1px solid #9a9a9a;color:#111}
      .t{height:30px;line-height:30px;padding-left:7px;color:#aaa;flex:none}
      .b{flex:1;border:2px solid #8c8c8c;margin:0 0 0 1px;padding:0 0 0 1px;line-height:12px}
    </style>
    <div class="t">钢筋显示控制面板</div>
    <div class="b">
      <g-check checked>底筋</g-check><g-check checked>显示其它图元</g-check><g-check checked>显示详细公式</g-check>
    </div>`);
  }
}
customElements.define("g-rebar-panel", GRebarPanel);

class GRebar extends HTMLElement {
  constructor() {
    super();
    shadow(this, `<style>
      :host{display:flex;flex:none;width:1123px;height:201px;margin-top:3px}
      .gut{flex:none;width:12px;background:radial-gradient(circle,#c4c4c4 1px,transparent 1.2px) 2px 14px/5px 6px}
      .x{display:block;margin:2px 0 0 0}
      .c{width:1111px;display:flex;flex-direction:column}
      .tb{padding:3px 0 3px 1px;height:22px;flex:none}
    </style>
    <div class="gut"><svg class="x" width="11" height="11"><rect x=".5" y=".5" width="10" height="10" fill="#f4dcdc" stroke="#666"/><path d="M2 2l7 7M9 2L2 9" stroke="#444"/></svg></div>
    <div class="c"><div class="tb"><slot></slot></div><slot name="table"></slot></div>`);
  }
}
customElements.define("g-rebar", GRebar);

class GTable extends HTMLElement {
  constructor() {
    super();
    var cols = "34px 72px 56px 36px 33px 201px 166px 156px 61px 38px 39px 49px 61px 62px 72px";
    var head = ["", "筋号", "直径<m>(mm)</m>", "级别", "图号", "图形", "计算公式", "公式描述", "长度<m>(mm)</m>", "根数", "搭接", "损耗<m>(%)</m>", "单重<m>(kg)</m>", "总重<m>(kg)</m>", "钢筋归类"];
    var hcells = head.map(function(h, i) { return `<div class="h${i == 2 ? " sel" : ""}">${h}</div>`; }).join("");
    var empty = "";
    for (var i = 0; i < 14; i++) empty += `<div class="e${i == 1 ? " thick" : ""}"></div>`;
    shadow(this, `<style>
      :host{display:flex;flex-direction:column;flex:none;height:172px;width:1111px;box-sizing:border-box;border:1px solid #a8a8a8;border-left-width:2px;border-bottom-width:2px;background:#fff;font-family:"Noto Sans CJK SC",sans-serif}
      .g{display:grid;grid-template-columns:${cols};grid-template-rows:20px 34px 19px;overflow:hidden;flex:none}
      .g>div{box-sizing:border-box;border-right:1px solid #c4c4c4;border-bottom:1px solid #c4c4c4;display:flex;align-items:center;overflow:hidden;white-space:nowrap}
      .h{background:linear-gradient(#fff,#ededed);justify-content:center;font-size:12px}
      .h.sel{background:linear-gradient(#f9d49a,#f3bd6c);color:#5a0a6e}
      m,.m{font:11px/14px "Liberation Mono",monospace;letter-spacing:-.6px}
      .d{background:#ccffd6;padding-left:2px}
      .g>.rh{background:#ffd78f;color:#800080;justify-content:center}
      .g>.rn{background:#f6f6f6;justify-content:center}
      .thick{border-left:2px solid #000}
      .g>.dia{background:#aeeadb}
      .g>.wrap{white-space:normal;line-height:13px;word-break:break-all}
      .cen{justify-content:center}
      .sh{width:138px;height:14px;border-left:2px solid #000;border-bottom:2px solid #000;margin-left:5px;color:#f00;text-align:center;font:11px/8px "Liberation Sans",sans-serif;padding-right:10px;box-sizing:border-box;flex:none}
      .sp{flex:1}
      .hs{flex:none;height:15px;display:flex;align-items:center;background:#eee;margin-bottom:1px}
      .hs svg{flex:none;margin:0 6px}
      .th{width:711px;height:15px;background:#c8c8c8;margin-left:-1px}
      .hs .r{margin-left:auto;margin-right:4px}
    </style>
    <div class="g">${hcells}
      <div class="rh m">1*</div>
      <div class="d wrap">筏板受力筋.1</div>
      <div class="d dia thick m">12</div>
      <div class="d cen">虫</div>
      <div class="d m">18</div>
      <div class="d" style="padding-left:10px"><span class="m">144</span><div class="sh">3397</div></div>
      <div class="d m">2993-40+12*d+37*d</div>
      <div class="d">净长-保护层+设定弯折+锚固</div>
      <div class="d m">3541</div><div class="d m">28</div><div class="d m">0</div><div class="d m">0</div><div class="d m">3.144</div><div class="d m">88.043</div><div class="d" style="padding-left:3px">直筋</div>
      <div class="rn m">2</div>${empty}
    </div>
    <div class="sp"></div>
    <div class="hs"><svg width="6" height="9"><path d="M5 1L1.5 4.5 5 8" fill="none" stroke="#555" stroke-width="2"/></svg><div class="th"></div>
      <svg class="r" width="6" height="9"><path d="M1 1l3.5 3.5L1 8" fill="none" stroke="#555" stroke-width="2"/></svg></div>`);
  }
}
customElements.define("g-table", GTable);

class GStatus extends HTMLElement {
  constructor() {
    super();
    var cells = [[148, "X=37387 Y=8096", 1], [78, "层高:<m>3.55m</m>"], [98, "底标高:<m>-3.58m</m>"], [48, "<m>1(4)</m>"], [915, ""], [69, "<m>222.5 FPS</m>"]];
    shadow(this, `<style>
      :host{display:flex;flex:none;height:20px;gap:2px;font-family:"Noto Sans CJK SC",sans-serif}
      div{box-sizing:border-box;height:20px;border:1px solid #dcdcdc;background:linear-gradient(#fff,#f2f2f2);display:flex;align-items:center;padding-left:1px;white-space:nowrap}
      m{font:11px/14px "Liberation Mono",monospace;letter-spacing:-.6px}
    </style>` + cells.map(function(c) {
      return `<div style="width:${c[0]}px">${c[2] ? "<m>" + c[1] + "</m>" : c[1]}</div>`;
    }).join(""));
  }
}
customElements.define("g-status", GStatus);

class GTaskbar extends HTMLElement {
  constructor() {
    super();
    var apps = [[49, "pinwheel", 26, 2], [49, "swirl", 24, 0], [48, "edge", 24, 5], [49, "store", 26, 0], [49, "explorer", 24, 0], [49, "gblue", 26, 0, "open"], [49, "ie", 24, 0, "open"], [48, "app", 24, 1, "on"]];
    var tiles = apps.map(function(a) {
      return `<div class="app ${a[4] || ""}" style="width:${a[0]}px;margin-left:${a[3]}px"><g-icon name="${a[1]}" size="${a[2]}"></g-icon></div>`;
    }).join("");
    shadow(this, `<style>
      :host{display:flex;height:40px;background:#040a10;color:#fff;align-items:stretch;overflow:hidden;font-family:"Liberation Sans","Noto Sans CJK SC",sans-serif}
      .st{flex:none;width:48px;background:#000;display:flex;align-items:center;justify-content:center}
      .se{flex:none;width:344px;background:#333;display:flex;align-items:center;color:#8e8e8e;font-size:14px}
      .ring{width:13px;height:13px;border:3px solid #ddd;border-radius:50%;margin:0 7px 0 10px;flex:none}
      .se g-icon{margin-left:auto;margin-right:13px}
      .apps{display:flex;margin-left:2px}
      .app{display:flex;align-items:center;justify-content:center;box-sizing:border-box;flex:none}
      .open{border-bottom:2px solid #76b9ed}
      .on{background:#3b4246;border-bottom:2px solid #76b9ed}
      .tray{display:flex;align-items:center;margin-left:234px;font-size:12px;line-height:18px}
      .col{display:flex;flex-direction:column;align-items:center;flex:none;white-space:nowrap}
      .t{display:flex;align-items:center;justify-content:center;flex:none;width:24px}
      .sog{width:16px;height:18px;border-radius:3px;background:#ea4f17;color:#fff;font:bold 14px/18px "Liberation Sans",sans-serif;text-align:center;transform:rotate(-6deg)}
    </style>
    <div class="st"><svg width="16" height="16"><path d="M0 2.5l7-1v6H0zM8 1.3L16 0v7.5H8zM0 8.5h7v6l-7-1zM8 8.5h8V16l-8-1.3z" fill="#fff"/></svg></div>
    <div class="se"><div class="ring"></div>在这里输入你要搜索的内容<g-icon name="mic" size="16"></g-icon></div>
    <div class="apps">${tiles}</div>
    <div class="tray">
      <div class="col" style="width:48px"><div>31%</div><div>CPU使用</div></div>
      <div class="t" style="margin-left:11px"><svg width="14" height="8"><path d="M1 7l6-6 6 6" fill="none" stroke="#fff"/></svg></div>
      <div class="t"><g-icon name="power"></g-icon></div><div class="t"><g-icon name="wifi"></g-icon></div><div class="t"><g-icon name="sound"></g-icon></div>
      <div class="t" style="font-size:14px">中</div>
      <div class="t" style="margin-left:5px"><div class="sog">S</div></div>
      <div class="col" style="width:70px;margin-left:11px;font-size:12.5px"><div>11:02</div><div>2017/7/2</div></div>
      <div class="t" style="margin-left:7px;width:24px"><g-icon name="note" size="20"></g-icon></div>
    </div>`);
  }
}
customElements.define("g-taskbar", GTaskbar);
</script>
</body>
</html>
